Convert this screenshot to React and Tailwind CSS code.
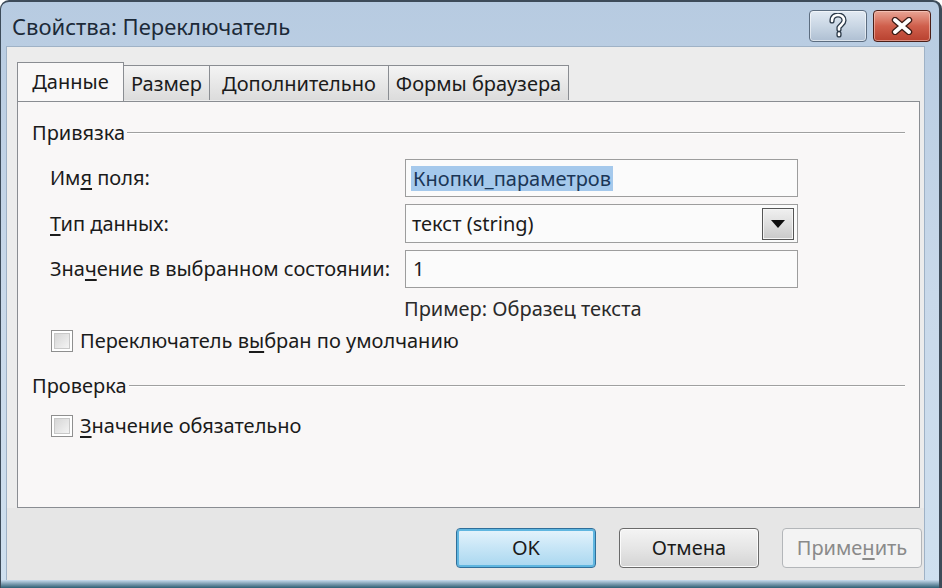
import React from "react";

const font = { fontFamily: '"Noto Sans", "Open Sans", Arial, sans-serif' };

function Tab({ children, selected, w }) {
  if (selected) {
    return (
      <div
        className={`${w} h-[39px] -mb-px mt-0 relative z-10 flex items-center justify-center border border-b-0 border-[#8a8d92] bg-[#f9f8f8] text-[20px] text-[#1b1b1b]`}
      >
        {children}
      </div>
    );
  }
  return (
    <div
      className={`${w} h-[35px] mt-[3px] flex items-center justify-center border border-b-0 border-l-0 border-[#8a8d92] bg-gradient-to-b from-[#f4f4f4] to-[#dcdcdc] text-[20px] text-[#1b1b1b] pt-[2px]`}
    >
      {children}
    </div>
  );
}

function GroupHeader({ children, mt }) {
  return (
    <div className={`${mt} h-[24px] flex items-center pl-[14px] pr-[14px]`}>
      <span className="text-[20px] text-[#1b1b1b] leading-none">{children}</span>
      <div className="flex-1 ml-[2px] h-[2px] border-t border-[#a0a0a0] border-b border-b-white mt-[-1px]" />
    </div>
  );
}

function Checkbox() {
  return (
    <div className="w-[22px] h-[22px] border border-[#8f8f8f] bg-white p-[2px] shrink-0">
      <div className="w-full h-full border border-[#c8c8c8] bg-gradient-to-br from-[#d6d6d6] to-[#f4f4f4]" />
    </div>
  );
}

export default function App() {
  return (
    <div className="w-[942px] h-[588px] overflow-hidden bg-white" style={font}>
      <div className="w-full h-full flex flex-col rounded-t-[9px] border-t-2 border-l border-r-[3px] border-[#3d4b59] bg-gradient-to-b from-[#b7cbe1] via-[#c9d9ea] to-[#cfe0ef]">
        {/* Title bar */}
        <div className="h-[44px] flex items-start justify-between shrink-0">
          <div className="pl-[11px] pt-[9px] text-[22px] leading-[30px] text-[#1c2a38]">
            Свойства: Переключатель
          </div>
          <div className="flex pt-[8px] pr-[8px] gap-[6px]">
            <div className="w-[58px] h-[32px] rounded-[4px] border border-[#5c6d80] bg-gradient-to-b from-[#e2eaf3] via-[#c9d6e4] to-[#aebfd2] flex items-center justify-center shadow-[inset_0_0_0_1px_rgba(255,255,255,0.55)]">
              <svg width="20" height="26" viewBox="0 0 20 26">
                <path
                  d="M4 8 C4 3.5 7 2 10 2 C13.5 2 16 4 16 7.5 C16 11 12 12 11 14.5 L11 16.5 M11 20.5 L11 22"
                  fill="none"
                  stroke="#2b3948"
                  strokeWidth="5.2"
                  strokeLinecap="round"
                  strokeLinejoin="round"
                />
                <path
                  d="M4 8 C4 3.5 7 2 10 2 C13.5 2 16 4 16 7.5 C16 11 12 12 11 14.5 L11 16.5 M11 20.5 L11 22"
                  fill="none"
                  stroke="#ffffff"
                  strokeWidth="2.6"
                  strokeLinecap="round"
                  strokeLinejoin="round"
                />
              </svg>
            </div>
            <div className="w-[58px] h-[32px] rounded-[4px] border border-[#4a1e17] bg-gradient-to-b from-[#e8a596] via-[#cf5f4c] to-[#b8412f] flex items-center justify-center shadow-[inset_0_0_0_1px_rgba(255,220,210,0.5)]">
              <svg width="26" height="18" viewBox="0 0 26 18">
                <path d="M6 3 L20 15 M20 3 L6 15" stroke="#3a1a14" strokeWidth="6.4" strokeLinecap="round" />
                <path d="M6 3 L20 15 M20 3 L6 15" stroke="#ffffff" strokeWidth="4" strokeLinecap="round" />
              </svg>
            </div>
          </div>
        </div>

        {/* Client area */}
        <div className="flex-1 ml-[5px] mr-[14px] bg-[#ececec] flex flex-col border border-[#9fb2c6] border-b-0">
          {/* Tabs */}
          <div className="flex pl-[10px] pt-[15px] items-start h-[54px] shrink-0">
            <Tab selected w="w-[107px]">Данные</Tab>
            <Tab w="w-[86px]">Размер</Tab>
            <Tab w="w-[179px]">Дополнительно</Tab>
            <Tab w="w-[180px]">Формы браузера</Tab>
          </div>

          {/* Panel */}
          <div className="ml-[10px] w-[903px] h-[407px] border border-[#8a8d92] bg-[#f9f7f7] flex flex-col shrink-0">
            <GroupHeader mt="mt-[19px]">Привязка</GroupHeader>

            <div className="mt-[14px] flex flex-col gap-[7px]">
              <div className="flex items-center pl-[32px]">
                <div className="w-[355px] text-[20px] text-[#1b1b1b]">
                  Им<span className="underline underline-offset-[3px]">я</span> поля:
                </div>
                <div className="w-[393px] h-[38px] border border-[#9d9d9d] bg-[#fbfbfb] flex items-center pl-[5px]">
                  <span className="bg-[#a5c9ec] text-[20px] text-[#1b3656] h-[25px] leading-[25px] px-[2px]">
                    Кнопки_параметров
                  </span>
                </div>
              </div>
              <div className="flex items-center pl-[32px]">
                <div className="w-[355px] text-[20px] text-[#1b1b1b]">
                  <span className="underline underline-offset-[3px]">Т</span>ип данных:
                </div>
                <div className="w-[393px] h-[39px] border border-[#9d9d9d] bg-[#fbfbfb] flex items-center justify-between pl-[6px] pr-[3px]">
                  <span className="text-[20px] text-[#1b1b1b]">текст (string)</span>
                  <div className="w-[32px] h-[32px] border border-[#555] bg-gradient-to-b from-[#f0f0f0] via-[#dedede] to-[#c9c9c9] flex items-center justify-center shadow-[inset_0_0_0_1px_#f4f4f4]">
                    <svg width="14" height="8" viewBox="0 0 14 8">
                      <path d="M0 0 H14 L7 8 Z" fill="#0d0d0d" />
                    </svg>
                  </div>
                </div>
              </div>
              <div className="flex items-center pl-[32px]">
                <div className="w-[355px] text-[20px] text-[#1b1b1b]">
                  Зна<span className="underline underline-offset-[3px]">ч</span>ение в выбранном состоянии:
                </div>
                <div className="w-[393px] h-[38px] border border-[#9d9d9d] bg-[#fbfbfb] flex items-center pl-[7px]">
                  <span className="text-[20px] text-[#1b1b1b]">1</span>
                </div>
              </div>
            </div>

            <div className="mt-[9px] h-[24px] flex items-center pl-[386px] text-[20px] text-[#2a2a2a]">
              Пример: Образец текста
            </div>

            <div className="mt-[8px] h-[24px] flex items-center pl-[33px] gap-[7px]">
              <Checkbox />
              <span className="text-[20px] text-[#1b1b1b]">
                Переключатель в<span className="underline underline-offset-[3px]">ы</span>бран по умолчанию
              </span>
            </div>

            <GroupHeader mt="mt-[21px]">Проверка</GroupHeader>

            <div className="mt-[16px] h-[24px] flex items-center pl-[33px] gap-[7px]">
              <Checkbox />
              <span className="text-[20px] text-[#1b1b1b]">
                <span className="underline underline-offset-[3px]">З</span>начение обязательно
              </span>
            </div>
          </div>

          {/* Footer */}
          <div className="flex-1 bg-[#e6e6e6] flex justify-end items-start pt-[20px] pr-[2px] gap-[23px]">
            <div className="w-[140px] h-[40px] rounded-[4px] border border-[#2f6f9a] bg-gradient-to-b from-[#e6f4fc] via-[#c6e5f6] to-[#a9d7f0] flex items-center justify-center text-[20px] text-[#1b1b1b] shadow-[inset_0_0_0_2px_#5fb6e0]">
              OK
            </div>
            <div className="w-[140px] h-[40px] rounded-[4px] border border-[#6a6a6a] bg-gradient-to-b from-[#f4f4f4] via-[#e6e6e6] to-[#d4d4d4] flex items-center justify-center text-[20px] text-[#1b1b1b] shadow-[inset_0_0_0_1px_#fbfbfb]">
              Отмена
            </div>
            <div className="w-[140px] h-[40px] rounded-[4px] border border-[#b3b6b9] bg-[#f3f3f3] flex items-center justify-center text-[20px] text-[#8a8a8a]">
              Приме<span className="underline underline-offset-[3px]">н</span>ить
            </div>
          </div>
        </div>
        {/* bottom frame */}
        <div className="h-[8px] shrink-0 bg-gradient-to-b from-[#c9dcee] to-[#2e5f74]" />
      </div>
    </div>
  );
}
